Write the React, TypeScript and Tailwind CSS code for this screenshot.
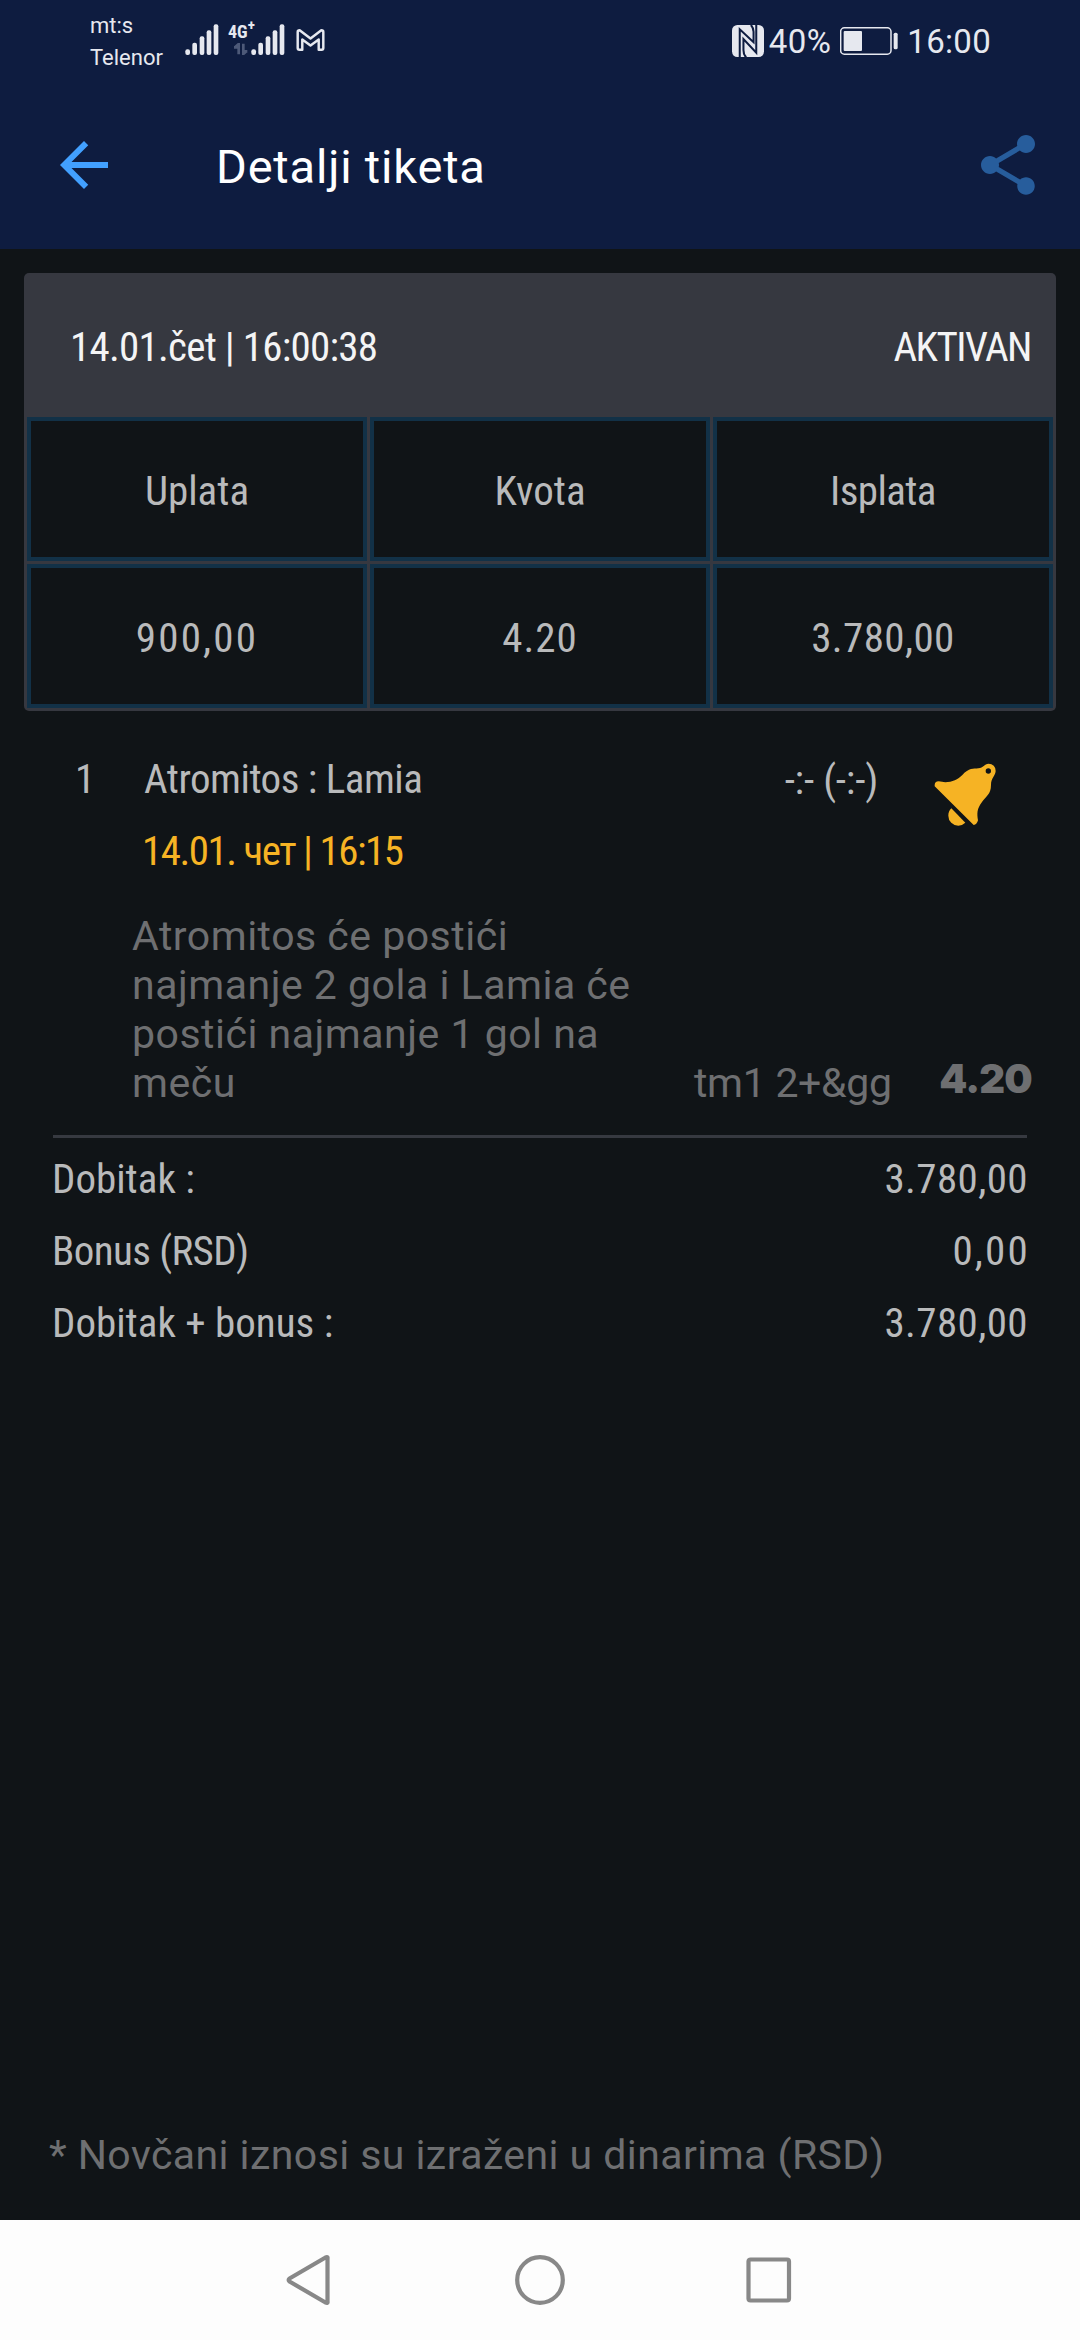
import { MdArrowBack, MdShare } from "react-icons/md";

const SUMMARY = [
  { label: "Uplata", value: "900,00", labelClass: "", valueClass: "tracking-[2.2px]" },
  { label: "Kvota", value: "4.20", labelClass: "", valueClass: "tracking-[1px]" },
  { label: "Isplata", value: "3.780,00", labelClass: "tracking-[-0.6px]", valueClass: "tracking-[0.4px]" },
];

const TOTALS = [
  { label: "Dobitak :", value: "3.780,00", labelClass: "", valueClass: "tracking-[0.4px]" },
  { label: "Bonus (RSD)", value: "0,00", labelClass: "tracking-[-0.6px]", valueClass: "-mr-0.5 tracking-[2.2px]" },
  { label: "Dobitak + bonus :", value: "3.780,00", labelClass: "", valueClass: "tracking-[0.4px]" },
];

const BARS = [
  { x: 0, h: 17 },
  { x: 21, h: 37 },
  { x: 43, h: 56 },
  { x: 64, h: 74 },
  { x: 85, h: 92 },
];

function SignalIcon({ className }: { className?: string }) {
  return (
    <svg viewBox="0 0 100 93" className={className} fill="currentColor">
      {BARS.map((b) => (
        <rect key={b.x} x={b.x} y={93 - b.h} width="14" height={b.h} rx="6" />
      ))}
    </svg>
  );
}

function GmailIcon() {
  return (
    <svg viewBox="707 88 86 67" className="mt-[29px] ml-[11px] h-[22px] w-[29px]" fill="none" stroke="currentColor" strokeWidth="7.500" strokeLinejoin="round">
      <path d="M716 151Q711 151 711 146V97Q711 92 717 92L750 117L783 92Q789 92 789 97V146Q789 151 784 151H775V120L750 138L725 120V151Z" />
    </svg>
  );
}

function NfcIcon() {
  return (
    <svg viewBox="63 72 95 95" className="size-8">
      <rect x="63" y="72" width="95" height="95" rx="16" fill="currentColor" />
      <path d="M86 168V85L127 123V92Q127 80 119 72" fill="none" stroke="#0e1c40" strokeWidth="6" />
      <path d="M135 71V154L97 114V146Q97 160 105 168" fill="none" stroke="#0e1c40" strokeWidth="6" />
    </svg>
  );
}

function BatteryIcon() {
  return (
    <svg viewBox="390 80 174 84" className="h-7 w-[58px]">
      <rect x="392" y="82.500" width="151" height="79" rx="11" fill="none" stroke="currentColor" strokeWidth="4.500" />
      <rect x="401" y="92" width="55" height="60" rx="3" fill="currentColor" />
      <rect x="551" y="97" width="12" height="50" rx="5" fill="currentColor" />
    </svg>
  );
}

function BellIcon() {
  return (
    <svg viewBox="822 100 189 189" className="mt-[20px] size-[63px]" fill="#f6b324">
      <path
        fillRule="evenodd"
        d="M824 166Q824 156 836 155C866 162 890 153 907 136C927 114 940 118 955 116C971 114 972 103 986 102A21 21 0 0 1 1007 124C1006 139 993 145 993 166C993 194 978 200 966 217C950 238 951 252 954 272Q951 284 941 286L824 170ZM993 124A8 8 0 1 0 977 124A8 8 0 1 0 993 124Z"
      />
      <path d="M874 236L916 279Q906 288 895 288A30 30 0 0 1 865 258Q865 244 874 236Z" />
    </svg>
  );
}

function StatusBar() {
  return (
    <div className="flex h-[81px] items-start pr-[89px] pl-[90px] text-[#e6e8ef]">
      <div className="mt-[10px] w-[95px] text-[22px] leading-8">
        <div>mt:s</div>
        <div>Telenor</div>
      </div>
      <SignalIcon className="mt-[24px] h-[31px] w-[34px]" />
      <div className="mt-[25px] ml-[9px] w-[28px]">
        <div className="flex font-['Roboto_Condensed','Roboto',sans-serif] text-[18px] leading-[13px] font-bold">
          4G<span className="-mt-1.5 text-[15px]">+</span>
        </div>
        <svg viewBox="0 0 42 34" className="mt-[5px] ml-[6px] h-[12px] w-[14px]" fill="none" stroke="#4d5978" strokeWidth="8">
          <path d="M0 12H14V33M14 12V2L3 12" />
          <path d="M28 1V24H40M28 22V32L38 23" />
        </svg>
      </div>
      <SignalIcon className="mt-[24px] -ml-[5px] h-[31px] w-[34px]" />
      <GmailIcon />
      <div className="ml-auto flex h-[81px] items-center text-[33px] leading-[40px]">
        <NfcIcon />
        <span className="mt-0.5 ml-[5px] tracking-[0.4px]">40%</span>
        <span className="ml-[9px]">
          <BatteryIcon />
        </span>
        <span className="mt-0.5 ml-[9px] tracking-[0.3px]">16:00</span>
      </div>
    </div>
  );
}

function NavBar() {
  return (
    <nav className="flex h-[120px] items-center justify-center bg-[#fdfdfd]">
      <svg viewBox="0 0 684 60" className="h-[60px] w-[684px]" fill="none" stroke="#888888" strokeWidth="4.200" strokeLinejoin="round">
        <path d="M129.500 8.500Q130 6.500 127.500 7.500L91.500 28.500Q90 30 91.500 31.500L127.500 52.500Q130 53.500 129.500 51.500Z" />
        <circle cx="342" cy="30" r="22.800" />
        <rect x="550.500" y="9.500" width="40.500" height="41" rx="2" />
      </svg>
    </nav>
  );
}

export default function App() {
  return (
    <div className="flex h-[2340px] w-[1080px] flex-col overflow-hidden bg-[#101417] font-['Roboto',sans-serif] text-[41px] whitespace-nowrap text-[#b9babb]">
      <header className="h-[249px] bg-[#0e1c40]">
        <StatusBar />
        <div className="flex h-[168px] items-center pr-9 pl-12">
          <MdArrowBack className="size-[72px] text-[#42a0ff]" />
          <h1 className="mt-1 ml-[96px] text-[47px] leading-[60px] tracking-[0.8px] text-white">Detalji tiketa</h1>
          <MdShare className="ml-auto size-[72px] text-[#275d9c]" />
        </div>
      </header>

      <main className="flex flex-1 flex-col pt-6 font-['Roboto_Condensed','Roboto',sans-serif]">
        <section className="mx-6 overflow-hidden rounded-[5px] bg-[#363840] px-[3px] pb-[3px]">
          <div className="flex h-36 items-center justify-between pt-1.5 pr-[22px] pl-[43px] text-[#f4f4f5]">
            <span className="tracking-[-0.75px]">14.01.čet | 16:00:38</span>
            <span className="tracking-[-1.5px]">AKTIVAN</span>
          </div>
          <div className="grid grid-cols-3 gap-[3px]">
            {SUMMARY.map((s) => (
              <div key={s.label} className="flex h-36 items-center justify-center border-4 border-[#123147] bg-[#101417] pt-1.5">
                <span className={s.labelClass}>{s.label}</span>
              </div>
            ))}
            {SUMMARY.map((s) => (
              <div key={s.value} className="flex h-36 items-center justify-center border-4 border-[#123147] bg-[#101417] pt-1.5">
                <span className={s.valueClass}>{s.value}</span>
              </div>
            ))}
          </div>
        </section>

        <section className="mt-8 leading-[72px]">
          <div className="flex h-36">
            <span className="ml-[75px] w-[69px]">1</span>
            <div>
              <div className="tracking-[-0.5px]">Atromitos : Lamia</div>
              <div className="-ml-0.5 tracking-[-1.5px] text-[#f6b324]">14.01. чет | 16:15</div>
            </div>
            <span className="mt-px mr-[56px] ml-auto tracking-[-0.2px]">-:- (-:-)</span>
            <div className="mr-[83px]">
              <BellIcon />
            </div>
          </div>
          <div className="mt-[25px] flex items-end pr-[48px] pl-[132px] font-['Roboto',sans-serif] leading-[49px] text-[#6e6f71]">
            <p className="w-[510px] tracking-[0.5px]">
              Atromitos će postići
              <br />
              najmanje 2 gola i Lamia će
              <br />
              postići najmanje 1 gol na
              <br />
              meču
            </p>
            <span className="ml-[52px] tracking-[-0.3px]">tm1 2+&amp;gg</span>
            <span className="mb-[5px] ml-auto font-['Inter',sans-serif] text-[40px] font-black tracking-[-0.8px]">4.20</span>
          </div>
          <div className="mx-[53px] mt-[27px] h-[3px] bg-[#363940]" />
          <dl className="mt-[5px] px-[52px]">
            {TOTALS.map((t) => (
              <div key={t.label} className="flex justify-between">
                <dt className={t.labelClass}>{t.label}</dt>
                <dd className={t.valueClass}>{t.value}</dd>
              </div>
            ))}
          </dl>
        </section>

        <p className="mt-auto mb-[29px] ml-[49px] font-['Roboto',sans-serif] leading-[72px] tracking-[0.43px] text-[#6e6f71]">
          * Novčani iznosi su izraženi u dinarima (RSD)
        </p>
      </main>

      <NavBar />
    </div>
  );
}
